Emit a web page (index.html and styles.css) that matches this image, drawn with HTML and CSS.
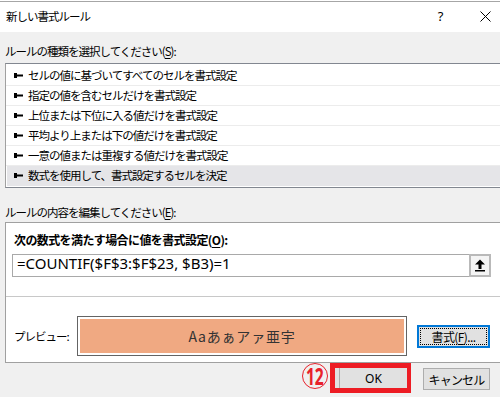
FILE: index.html
```html
<!DOCTYPE html>
<html lang="ja">
<head>
<meta charset="utf-8">
<title>新しい書式ルール</title>
<link rel="stylesheet" href="styles.css">
</head>
<body>
<div class="dialog">
  <div class="topstrip"></div>
  <div class="titlebar">
    <div class="title">新しい書式ルール</div>
    <div class="tbtn help">?</div>
    <div class="tbtn close">
      <svg width="11" height="11" viewBox="0 0 11 11"><path d="M0.5 0.5 L10.5 10.5 M10.5 0.5 L0.5 10.5" stroke="#000" stroke-width="1" fill="none"/></svg>
    </div>
  </div>
  <div class="content">
    <div class="section-label first">ルールの種類を選択してください(<u>S</u>):</div>
    <div class="list">
      <div class="row"><svg class="mark" width="9" height="5" viewBox="0 0 9 5"><rect x="0" y="0" width="3" height="5" fill="#000"/><rect x="3" y="1.5" width="6" height="2" fill="#000"/></svg><span>セルの値に基づいてすべてのセルを書式設定</span></div>
      <div class="row"><svg class="mark" width="9" height="5" viewBox="0 0 9 5"><rect x="0" y="0" width="3" height="5" fill="#000"/><rect x="3" y="1.5" width="6" height="2" fill="#000"/></svg><span>指定の値を含むセルだけを書式設定</span></div>
      <div class="row"><svg class="mark" width="9" height="5" viewBox="0 0 9 5"><rect x="0" y="0" width="3" height="5" fill="#000"/><rect x="3" y="1.5" width="6" height="2" fill="#000"/></svg><span>上位または下位に入る値だけを書式設定</span></div>
      <div class="row"><svg class="mark" width="9" height="5" viewBox="0 0 9 5"><rect x="0" y="0" width="3" height="5" fill="#000"/><rect x="3" y="1.5" width="6" height="2" fill="#000"/></svg><span>平均より上または下の値だけを書式設定</span></div>
      <div class="row"><svg class="mark" width="9" height="5" viewBox="0 0 9 5"><rect x="0" y="0" width="3" height="5" fill="#000"/><rect x="3" y="1.5" width="6" height="2" fill="#000"/></svg><span>一意の値または重複する値だけを書式設定</span></div>
      <div class="row selected"><svg class="mark" width="9" height="5" viewBox="0 0 9 5"><rect x="0" y="0" width="3" height="5" fill="#000"/><rect x="3" y="1.5" width="6" height="2" fill="#000"/></svg><span>数式を使用して、書式設定するセルを決定</span></div>
    </div>
    <div class="section-label second">ルールの内容を編集してください(<u>E</u>):</div>
    <div class="panel">
      <div class="formula-label">次の数式を満たす場合に値を書式設定(<u>O</u>):</div>
      <div class="input">
        <div class="input-text">=COUNTIF($F$3:$F$23, $B3)=1</div>
        <div class="up-btn">
          <svg width="12" height="13" viewBox="0 0 12 13"><path d="M6 0.5 L11 5.5 L7.5 5.5 L7.5 10 L4.5 10 L4.5 5.5 L1 5.5 Z" fill="#000"/><rect x="1" y="11" width="10" height="1.5" fill="#000"/></svg>
        </div>
      </div>
      <div class="sep"></div>
      <div class="preview-row">
        <div class="preview-label">プレビュー:</div>
        <div class="preview-box"><div class="preview-fill">Aaあぁアァ亜宇</div></div>
        <div class="fmt-btn"><div class="focus">書式(<u>F</u>)...</div></div>
      </div>
    </div>
  </div>
  <div class="footer">
    <div class="callout"><span class="num">12</span></div>
    <div class="ok-frame"><div class="ok">OK</div></div>
    <div class="btn cancel">キャンセル</div>
  </div>
</div>
</body>
</html>
```
FILE: styles.css
```css
html, body {
  margin: 0;
  padding: 0;
  background: #f0f0f0;
}
body {
  width: 500px;
  height: 397px;
  overflow: hidden;
  font-family: "Noto Sans CJK JP", sans-serif;
  font-size: 11.5px;
  color: #000;
  letter-spacing: -1px;
}
u { text-decoration-thickness: 1px; text-underline-offset: 2px; }
.dialog { width: 508px; }
.topstrip { height: 1px; background: #fff; }
.titlebar {
  height: 30px;
  border-top: 1px solid #a6a6a6;
  background: #fff;
  display: flex;
}
.title { flex: 1; padding-left: 6px; line-height: 28px; }
.tbtn {
  width: 46px;
  height: 30px;
  display: flex;
  align-items: center;
  justify-content: center;
}
.help { font-family: "Noto Sans", sans-serif; font-size: 13px; padding: 0 0 2px 3px; box-sizing: border-box; letter-spacing: normal; }
.close { padding-bottom: 2px; box-sizing: border-box; }
.content { padding: 0 5px; }
.section-label { box-sizing: border-box; line-height: 17px; }
.section-label.first { height: 31px; padding-top: 11px; }
.section-label.second { height: 34px; padding-top: 16px; }
.list {
  border: 1px solid #828790;
  border-left-color: #a0a0a0;
  background: #fff;
  padding: 2px 0 1px 0;
}
.row {
  height: 19px;
  line-height: 19px;
  border-bottom: 1px solid #ececec;
  display: flex;
  align-items: center;
  padding-left: 8px;
}
.row .mark { margin-right: 5px; flex: none; }
.row.selected { background: #e5e5e8; border-bottom-color: #e5e5e8; margin-left: 1px; padding-left: 7px; }
.panel {
  border: 1px solid #a0a0a0;
  background: #fff;
}
.formula-label { padding: 8px 0 0 8px; line-height: 18px; font-weight: bold; font-size: 12px; letter-spacing: -0.6px; }
.input {
  margin: 5px 11px 0 6px;
  height: 23px;
  box-sizing: border-box;
  border: 1px solid #a9a9a9;
  display: flex;
}
.input-text {
  flex: 1;
  padding: 1px 0 0 4px;
  font-family: "Noto Sans", sans-serif;
  font-size: 15px;
  line-height: 15px;
  color: #000;
  letter-spacing: normal;
}
.up-btn {
  width: 22px;
  margin: -1px -1px -1px 0;
  box-sizing: border-box;
  border: 2px solid #b9b9b9;
  background: #f4f4f4;
  display: flex;
  align-items: center;
  justify-content: center;
}
.sep { margin-top: 19px; border-top: 1px solid #c8c8c8; }
.preview-row {
  display: flex;
  align-items: center;
  padding: 19px 0 6px 8px;
}
.preview-label { width: 63px; }
.preview-box {
  width: 330px;
  height: 40px;
  box-sizing: border-box;
  border: 1px solid #646464;
  padding: 2px;
  background: #fff;
}
.preview-fill {
  height: 100%;
  background: #f0a982;
  display: flex;
  align-items: center;
  justify-content: center;
  font-size: 14px;
  letter-spacing: 0.8px;
  color: #333;
}
.fmt-btn {
  margin-left: 10px;
  width: 73px;
  height: 23px;
  box-sizing: border-box;
  border: 2px solid #0078d7;
  background: #e1e1e1;
  padding: 1px;
}
.focus {
  height: 100%;
  box-sizing: border-box;
  border: 1px dotted #000;
  display: flex;
  align-items: center;
  justify-content: center;
  font-size: 12px;
  letter-spacing: -0.6px;
}
.footer {
  height: 34px;
  display: flex;
  justify-content: flex-end;
  align-items: flex-start;
  padding-right: 18px;
}
.callout {
  width: 26px;
  height: 26px;
  box-sizing: border-box;
  border: 1.5px solid #e8202a;
  border-radius: 50%;
  color: #e8202a;
  display: flex;
  align-items: center;
  justify-content: center;
  margin-right: 2px;
  letter-spacing: normal;
}
.callout .num {
  display: inline-block;
  font-family: "Noto Sans", sans-serif;
  font-weight: bold;
  font-size: 23px;
  line-height: 22px;
  transform: scaleX(0.68);
  letter-spacing: -0.5px;
}
.ok-frame {
  border: 5px solid #ed1c24;
  border-right-width: 4px;
  background: #e1e1e1;
}
.ok {
  margin-left: 4px;
  width: 68px;
  height: 20px;
  border-left: 1px solid #adadad;
  box-sizing: border-box;
  display: flex;
  align-items: center;
  justify-content: center;
  font-family: "Noto Sans", sans-serif;
  font-size: 12px;
  letter-spacing: normal;
}
.btn {
  width: 67px;
  height: 22px;
  box-sizing: border-box;
  border: 1px solid #adadad;
  background: #e1e1e1;
  display: flex;
  align-items: center;
  justify-content: center;
  font-size: 12px;
  letter-spacing: -0.8px;
}
.cancel { margin-left: 12px; margin-top: 5px; }
```
